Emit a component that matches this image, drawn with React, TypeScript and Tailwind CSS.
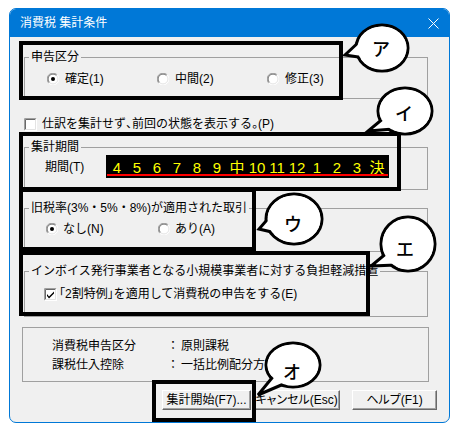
import type { ReactNode } from 'react'

const cells = ['4', '5', '6', '7', '8', '9', '中', '10', '11', '12', '1', '2', '3', '決']

function Radio({ checked }: { checked?: boolean }) {
  return (
    <svg width="12" height="12" viewBox="0 0 12 12" className="shrink-0">
      <circle cx="6" cy="6" r="5.5" fill="#fff" />
      <path d="M1.8 10.2 A5.5 5.5 0 0 1 10.2 1.8" fill="none" stroke="#a0a0a0" />
      <path d="M10.2 1.8 A5.5 5.5 0 0 1 1.8 10.2" fill="none" stroke="#ffffff" />
      <path d="M2.5 9.5 A4.5 4.5 0 0 1 9.5 2.5" fill="none" stroke="#696969" />
      <path d="M9.5 2.5 A4.5 4.5 0 0 1 2.5 9.5" fill="none" stroke="#e3e3e3" />
      {checked && <circle cx="6" cy="6" r="2" fill="#000" />}
    </svg>
  )
}

function Check({ checked }: { checked?: boolean }) {
  return (
    <svg width="13" height="13" viewBox="0 0 13 13" className="shrink-0">
      <rect x="0" y="0" width="13" height="13" fill="#fff" />
      <path d="M0.5 12.5 V0.5 H12.5" fill="none" stroke="#a0a0a0" />
      <path d="M12.5 0.5 V12.5 H0.5" fill="none" stroke="#ffffff" />
      <path d="M1.5 11.5 V1.5 H11.5" fill="none" stroke="#696969" />
      <path d="M11.5 1.5 V11.5 H1.5" fill="none" stroke="#e3e3e3" />
      {checked && <path d="M3 6 L5 8.5 L10 3.5 L10 5.5 L5 10.5 L3 8 Z" fill="#000" />}
    </svg>
  )
}

function Group({ label, className, children }: { label: string; className: string; children: ReactNode }) {
  return (
    <fieldset className={`border border-[#a0a0a0] ${className}`}>
      <legend className="ml-[4px] px-[2px] text-[12px] leading-[14px]">{label}</legend>
      {children}
    </fieldset>
  )
}

function Btn({ w, children }: { w: string; children: ReactNode }) {
  return (
    <button
      className={`${w} h-[20px] shrink-0 whitespace-nowrap border-t border-l border-t-white border-l-white border-r border-b border-r-[#696969] border-b-[#696969] bg-[#f0f0f0] text-[12px] leading-[14px] shadow-[inset_-1px_-1px_0_#a0a0a0] [font-feature-settings:'palt']`}
    >
      {children}
    </button>
  )
}

function Callout({ cx, cy, rx, ry, tail, label, tx, ty }: { cx: number; cy: number; rx: number; ry: number; tail: string; label: string; tx: number; ty: number }) {
  return (
    <g>
      <ellipse cx={cx} cy={cy} rx={rx} ry={ry} fill="#fff" stroke="#000" strokeWidth="3" />
      <path d={tail} fill="#fff" stroke="#000" strokeWidth="3" strokeLinejoin="miter" />
      <ellipse cx={cx} cy={cy} rx={rx - 1.5} ry={ry - 1.5} fill="#fff" />
      <text x={tx} y={ty} textAnchor="middle" dominantBaseline="central" fontSize="18" fontWeight="500" fill="#000">
        {label}
      </text>
    </g>
  )
}

export default function App() {
  return (
    <div className="relative h-[431px] w-[461px] bg-white pl-[9px] pt-[8px] font-['Liberation_Sans','Noto_Sans_CJK_JP',sans-serif] text-black">
      <div className="flex h-[415px] w-[441px] flex-col overflow-hidden rounded-[7px] border border-[#0078d7] bg-[#f0f0f0]">
        {/* title bar */}
        <div className="flex h-[28px] shrink-0 items-center justify-between bg-[#0078d7] pl-[10px] pr-[10px] text-[12px] text-white">
          <span>消費税 集計条件</span>
          <svg width="11" height="11" viewBox="0 0 11 11">
            <path d="M0.5 0.5 L10.5 10.5 M10.5 0.5 L0.5 10.5" stroke="#fff" strokeWidth="1" />
          </svg>
        </div>

        <div className="flex flex-col pl-[14px] pr-[21px] pt-[13px]">
          <Group label="申告区分" className="h-[49px]">
            <div className="mt-[8px] flex h-[14px] items-center pl-[22px] text-[12px]">
              <label className="flex w-[110px] items-center gap-[6px]"><Radio checked />確定(1)</label>
              <label className="flex w-[110px] items-center gap-[6px]"><Radio />中間(2)</label>
              <label className="flex items-center gap-[6px]"><Radio />修正(3)</label>
            </div>
          </Group>

          <label className="mt-[18px] flex h-[14px] items-center gap-[5px] text-[12px]">
            <Check />
            <span>仕訳を集計せず<span className="[font-feature-settings:'palt']">、</span>前回の状態を表示する<span className="[font-feature-settings:'palt']">。</span>(P)</span>
          </label>

          <Group label="集計期間" className="mt-[9px] h-[50px]">
            <div className="mt-[1px] flex items-center pl-[20px] text-[12px]">
              <span className="w-[61px]">期間(T)</span>
              <div className="flex h-[23px] w-[283px] flex-col bg-black pl-[1px]">
                <div className="flex h-[19px] items-start">
                  {cells.map((c) => (
                    <span key={c} className="h-[19px] w-[20px] text-center text-[15px] leading-[26px] text-[#ffff00]">
                      {c}
                    </span>
                  ))}
                </div>
                <div className="h-[2px] w-[281px] bg-[#ff0000]" />
              </div>
            </div>
          </Group>

          <Group label="旧税率(3%・5%・8%)が適用された取引" className="mt-[11px] h-[51px]">
            <div className="mt-[7px] flex h-[14px] items-center pl-[21px] text-[12px]">
              <label className="flex w-[112px] items-center gap-[5px]"><Radio checked />なし(N)</label>
              <label className="flex items-center gap-[5px]"><Radio />あり(A)</label>
            </div>
          </Group>

          <Group label="インボイス発行事業者となる小規模事業者に対する負担軽減措置" className="mt-[12px] h-[53px]">
            <label className="mt-[9px] flex h-[14px] items-center gap-[2px] pl-[19px] text-[12px]">
              <Check checked />
              <span>
                <span className="[font-feature-settings:'palt']">「</span>2割特例<span className="[font-feature-settings:'palt']">」</span>を適用して消費税の申告をする(E)
              </span>
            </label>
          </Group>

          <div className="-ml-[2px] mt-[10px] h-[55px] w-[407px] border border-[#a0a0a0] pl-[29px] pt-[8px] text-[12px]">
            <div className="flex h-[19px] items-center">
              <span className="w-[115px]">消費税申告区分</span>
              <span>：</span>
              <span className="ml-[2px]">原則課税</span>
            </div>
            <div className="flex h-[19px] items-center">
              <span className="w-[115px]">課税仕入控除</span>
              <span>：</span>
              <span className="ml-[2px]">一括比例配分方式</span>
            </div>
          </div>

          <div className="-mr-[9px] mt-[8px] flex justify-end">
            <Btn w="w-[89px]">集計開始(F7)...</Btn>
            <div className="ml-[2px]" />
            <Btn w="w-[87px]">キャンセル(Esc)</Btn>
            <div className="ml-[12px]" />
            <Btn w="w-[85px]">ヘルプ(F1)</Btn>
          </div>
        </div>
      </div>

      {/* annotation overlay */}
      <svg className="pointer-events-none absolute left-0 top-0" width="461" height="431" viewBox="0 0 461 431">
        <g fill="none" stroke="#000" strokeWidth="4">
          <rect x="21" y="43" width="320" height="55" />
          <rect x="21" y="134" width="378" height="55" />
          <rect x="21" y="190" width="233" height="59" />
          <rect x="21" y="253" width="347" height="61" />
          <rect x="154" y="382" width="100" height="38" />
        </g>
        <Callout cx={382} cy={48} rx={26} ry={23} tail="M361 40 L345 55 L365 58" label="ア" tx={381} ty={50} />
        <Callout cx={405} cy={111} rx={27} ry={23} tail="M385 117 L368 131 L393 129" label="イ" tx={404} ty={114} />
        <Callout cx={294} cy={219} rx={28} ry={25} tail="M273 213 L259 229 L276 233" label="ウ" tx={293} ty={225} />
        <Callout cx={408} cy={244} rx={27} ry={27} tail="M388 252 L371 266 L396 265" label="エ" tx={405} ty={250} />
        <Callout cx={293} cy={365} rx={27} ry={22} tail="M276 373 L258 395 L286 383" label="オ" tx={292} ty={373} />
      </svg>
    </div>
  )
}
